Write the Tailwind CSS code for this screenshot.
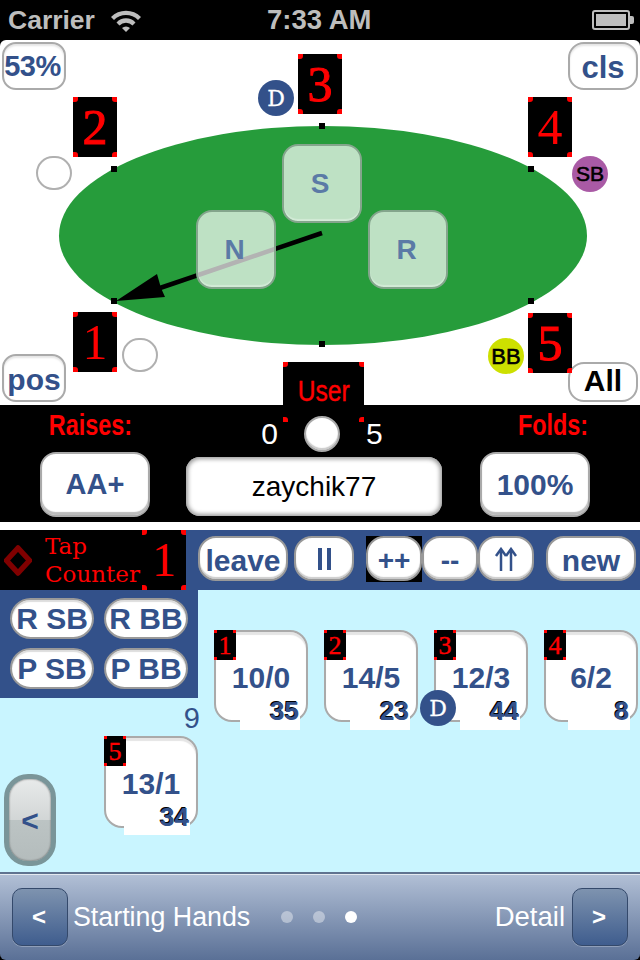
<!DOCTYPE html>
<html lang="en">
  <head>
    <meta charset="UTF-8" />
    <title>Tap Counter</title>
    <script src="https://cdn.jsdelivr.net/npm/@tailwindcss/browser@4"></script>
  </head>
  <body class="bg-black w-[640px] h-[960px] overflow-hidden font-['Liberation_Sans',Arial,sans-serif]">
    <!-- status bar -->
    <header class="relative h-[40px] flex items-center px-[8px] text-[#bdbdbd] font-bold">
      <span class="text-[26.5px] leading-none">Carrier</span>
      <svg class="ml-[15px]" width="32" height="24" viewBox="0 0 32 24">
        <path d="M1 9 A21 21 0 0 1 31 9 L28 12 A17 17 0 0 0 4 12 Z M6.5 14.5 A13 13 0 0 1 25.5 14.5 L22.5 17.5 A9 9 0 0 0 9.5 17.5 Z M12 20 A6 6 0 0 1 20 20 L16 24 Z" fill="#bdbdbd" />
      </svg>
      <span class="absolute left-[267px] top-[4px] text-[27.5px] leading-[32px]">7:33 AM</span>
      <div class="ml-auto mr-[-2px] flex items-center">
        <div class="w-[38px] h-[20px] border-2 border-[#bdbdbd] rounded-[3px] p-[2px]"><div class="h-full bg-[#bdbdbd]"></div></div>
        <div class="w-[4px] h-[8px] bg-[#bdbdbd] rounded-r-[2px]"></div>
      </div>
    </header>

    <!-- table, items sit on a free canvas -->
    <section class="relative z-10 h-[365px] bg-white rounded-t-[6px]">
      <div class="absolute left-[59px] top-[86px] w-[528px] h-[219px] rounded-[50%] bg-[#269c3b]"></div>

      <svg class="absolute left-0 top-0" width="640" height="365" viewBox="0 0 640 365">
        <line x1="322" y1="193" x2="160" y2="248" stroke="#000" stroke-width="4.5" />
        <polygon points="116,261 157,234 161,248 165,257" fill="#000" />
      </svg>

      <div class="absolute left-[111px] top-[126px] w-[6px] h-[6px] bg-black"></div>
      <div class="absolute left-[319px] top-[83px] w-[6px] h-[6px] bg-black"></div>
      <div class="absolute left-[528px] top-[126px] w-[6px] h-[6px] bg-black"></div>
      <div class="absolute left-[111px] top-[258px] w-[6px] h-[6px] bg-black"></div>
      <div class="absolute left-[528px] top-[258px] w-[6px] h-[6px] bg-black"></div>
      <div class="absolute left-[319px] top-[301px] w-[6px] h-[6px] bg-black"></div>

      <button class="absolute left-[282px] top-[104px] w-[80px] h-[79px] pr-[4px] pt-[1px] rounded-[16px] border-2 border-[#84a58c] bg-white/70 shadow-[inset_0_-2px_1px_#ffffff55] text-[#5b7aa6] font-bold text-[28px]">S</button>
      <button class="absolute left-[196px] top-[170px] w-[80px] h-[79px] pr-[3px] pt-[1px] rounded-[16px] border-2 border-[#84a58c] bg-white/70 shadow-[inset_0_-2px_1px_#ffffff55] text-[#5b7aa6] font-bold text-[28px]">N</button>
      <button class="absolute left-[368px] top-[170px] w-[80px] h-[79px] pr-[3px] pt-[1px] rounded-[16px] border-2 border-[#84a58c] bg-white/70 shadow-[inset_0_-2px_1px_#ffffff55] text-[#5b7aa6] font-bold text-[28px]">R</button>

      <button class="absolute left-[2px] top-[2px] w-[64px] h-[48px] pt-[1px] pr-[3px] rounded-[14px] border-2 border-[#aaa] bg-white shadow-[inset_0_2px_2px_#e5e5e5] text-[#33518a] font-bold text-[29px] tracking-[-0.5px]">53%</button>
      <button class="absolute left-[568px] top-[2px] w-[70px] h-[48px] pt-[1px] rounded-[16px] border-2 border-[#aaa] bg-white shadow-[inset_0_2px_2px_#e5e5e5] text-[#33518a] font-bold text-[31px]">cls</button>
      <button class="absolute left-[2px] top-[314px] w-[64px] h-[48px] pt-[1px] rounded-[14px] border-2 border-[#aaa] bg-white shadow-[inset_0_2px_2px_#e5e5e5] text-[#33518a] font-bold text-[30px]">pos</button>
      <button class="absolute left-[568px] top-[322px] w-[70px] h-[40px] pb-[2px] rounded-[16px] border-2 border-[#aaa] bg-white text-black font-bold text-[30px] leading-none">All</button>

      <div data-ticks="lg" class="absolute left-[73px] top-[57px] w-[44px] h-[60px] bg-black text-[#f00] font-['Liberation_Serif',serif] text-[50px] [-webkit-text-stroke:1px_#f00] flex items-center justify-center">2</div>
      <div data-ticks="lg" class="absolute left-[298px] top-[14px] w-[44px] h-[60px] bg-black text-[#f00] font-['Liberation_Serif',serif] text-[50px] [-webkit-text-stroke:1px_#f00] flex items-center justify-center">3</div>
      <div data-ticks="lg" class="absolute left-[528px] top-[57px] w-[44px] h-[60px] bg-black text-[#f00] font-['Liberation_Serif',serif] text-[50px] flex items-center justify-center">4</div>
      <div data-ticks="lg" class="absolute left-[73px] top-[272px] w-[44px] h-[60px] bg-black text-[#f00] font-['Liberation_Serif',serif] text-[50px] flex items-center justify-center">1</div>
      <div data-ticks="lg" class="absolute left-[528px] top-[273px] w-[44px] h-[60px] bg-black text-[#f00] font-['Liberation_Serif',serif] text-[50px] [-webkit-text-stroke:1px_#f00] flex items-center justify-center">5</div>
      <div data-ticks="lg" class="absolute left-[283px] top-[322px] w-[81px] h-[60px] bg-black text-[#f00] text-[30px] [-webkit-text-stroke:0.4px_#f00] flex items-start justify-center pt-[11px]"><span class="inline-block leading-[36px] scale-x-[0.82]">User</span></div>

      <div class="absolute left-[258px] top-[40px] w-[36px] h-[36px] rounded-full bg-[#33518a] text-white font-['DejaVu_Serif',serif] text-[22px] [-webkit-text-stroke:0.3px_#fff] flex items-center justify-center">D</div>
      <div class="absolute left-[572px] top-[116px] w-[36px] h-[36px] rounded-full bg-[#a95aa5] text-black text-[21px] flex items-center justify-center [-webkit-text-stroke:0.6px_#000]">SB</div>
      <div class="absolute left-[488px] top-[298px] w-[36px] h-[36px] rounded-full bg-[#cde000] text-black text-[22px] flex items-center justify-center [-webkit-text-stroke:0.6px_#000]">BB</div>
      <div class="absolute left-[36px] top-[116px] w-[36px] h-[34px] rounded-full border-2 border-[#b0b0b0] bg-white"></div>
      <div class="absolute left-[122px] top-[298px] w-[36px] h-[34px] rounded-full border-2 border-[#b0b0b0] bg-white"></div>
    </section>

    <!-- raises / name / folds -->
    <section class="h-[117px] bg-black flex pl-[40px]">
      <div class="w-[110px] flex flex-col items-center">
        <div class="h-[47px] mr-[10px] text-[#f00] font-bold text-[30px] leading-[40px]"><span class="inline-block scale-x-[0.78]">Raises:</span></div>
        <button class="w-[110px] h-[65px] rounded-[16px] border-2 border-[#aaa] bg-white shadow-[inset_0_-3px_1px_#bbb] text-[#33518a] font-bold text-[29px]">AA+</button>
      </div>
      <div class="w-[256px] ml-[36px] flex flex-col items-center">
        <div class="h-[52px] w-full flex items-start justify-center gap-[26px] text-white text-[30px] pt-[11px] pl-[16px]">
          <span class="leading-[36px]">0</span>
          <span class="relative z-20 w-[36px] h-[36px] rounded-full bg-white border-2 border-[#aaa] shadow-[inset_0_-2px_1px_#ccc]"></span>
          <span class="leading-[36px]">5</span>
        </div>
        <div class="w-full h-[59px] rounded-[14px] bg-white shadow-[inset_0_0_4px_2px_#999] text-black text-[28px] flex items-center justify-center">zaychik77</div>
      </div>
      <div class="w-[110px] ml-[38px] flex flex-col items-center">
        <div class="h-[47px] ml-[36px] text-[#f00] font-bold text-[30px] leading-[40px]"><span class="inline-block scale-x-[0.78]">Folds:</span></div>
        <button class="w-[110px] h-[65px] rounded-[16px] border-2 border-[#aaa] bg-white shadow-[inset_0_-3px_1px_#bbb] text-[#33518a] font-bold text-[30px]">100%</button>
      </div>
    </section>
    <div class="h-[8px] bg-white"></div>

    <!-- toolbar -->
    <section class="h-[60px] bg-[#33518a] flex items-center">
      <div class="w-[186px] h-full bg-black flex items-center">
        <svg class="ml-[4px] shrink-0" width="28" height="31" viewBox="0 0 28 31">
          <polygon points="14,3 25.5,15.5 14,28 2.5,15.5" fill="none" stroke="#800000" stroke-width="5.5" stroke-linejoin="round" />
        </svg>
        <div class="ml-[13px] w-[97px] shrink-0 text-[#f00] font-['DejaVu_Serif',serif] text-[23px] leading-[28px]">Tap<br />Counter</div>
        <div data-ticks="lg" class="relative ml-auto w-[44px] h-[60px] shrink-0 text-[#f00] font-['Liberation_Serif',serif] text-[48px] flex items-center justify-center">1</div>
      </div>
      <div class="flex items-center h-[46px] ml-[12px] mb-[3px]">
        <button class="w-[90px] h-[45px] rounded-[18px] border-2 border-[#999] bg-white shadow-[inset_0_-2px_1px_#ccc] text-[#33518a] font-bold text-[30px]">leave</button>
        <button class="w-[60px] h-[45px] ml-[6px] rounded-[18px] border-2 border-[#999] bg-white shadow-[inset_0_-2px_1px_#ccc] flex items-center justify-center gap-[5px]">
          <span class="w-[4px] h-[22px] bg-[#33518a]"></span>
          <span class="w-[4px] h-[22px] bg-[#33518a]"></span>
        </button>
        <div class="ml-[12px] w-[56px] h-[46px] bg-black">
          <button class="w-[56px] h-[45px] pt-[2px] rounded-[18px] border-2 border-[#999] bg-white shadow-[inset_0_-2px_1px_#ccc] text-[#33518a] font-bold text-[28px]">++</button>
        </div>
        <button class="w-[56px] h-[45px] pt-[2px] rounded-[18px] border-2 border-[#999] bg-white shadow-[inset_0_-2px_1px_#ccc] text-[#33518a] font-bold text-[28px]">--</button>
        <button class="w-[56px] h-[45px] rounded-[18px] border-2 border-[#999] bg-white shadow-[inset_0_-2px_1px_#ccc] flex items-center justify-center">
          <svg width="24" height="24" viewBox="0 0 24 24" fill="none" stroke="#33518a" stroke-width="2.5">
            <path d="M7 24 V3 M2 9 L7 2 L12 9 M17 24 V3 M12 9 L17 2 L22 9" />
          </svg>
        </button>
        <button class="w-[90px] h-[45px] ml-[12px] rounded-[18px] border-2 border-[#999] bg-white shadow-[inset_0_-2px_1px_#ccc] text-[#33518a] font-bold text-[30px]">new</button>
      </div>
    </section>

    <!-- hands area -->
    <section class="h-[282px] bg-[#c9f5ff] flex">
      <div class="w-[198px] shrink-0">
        <div class="h-[108px] bg-[#33518a] grid grid-cols-[84px_84px] grid-rows-[41px_41px] gap-x-[10px] gap-y-[9px] pt-[8px] pl-[10px]">
          <button class="rounded-full border-2 border-[#999] bg-white shadow-[inset_0_2px_1px_#ddd] text-[#33518a] font-bold text-[30px] leading-none whitespace-nowrap">R SB</button>
          <button class="rounded-full border-2 border-[#999] bg-white shadow-[inset_0_2px_1px_#ddd] text-[#33518a] font-bold text-[30px] leading-none whitespace-nowrap">R BB</button>
          <button class="rounded-full border-2 border-[#999] bg-white shadow-[inset_0_2px_1px_#ddd] text-[#33518a] font-bold text-[30px] leading-none whitespace-nowrap">P SB</button>
          <button class="rounded-full border-2 border-[#999] bg-white shadow-[inset_0_2px_1px_#ddd] text-[#33518a] font-bold text-[30px] leading-none whitespace-nowrap">P BB</button>
        </div>
        <div class="h-[38px] text-right text-[#33518a] text-[29px] leading-[40px] mr-[-2px]">9</div>
        <div class="flex items-start">
          <button class="mt-[38px] ml-[4px] w-[52px] h-[92px] rounded-[24px] border-[5px] border-[#7a9599] shadow-[inset_0_0_2px_#555] bg-[linear-gradient(#e8eaea_0%,#d2d6d6_50%,#bcc4c4_50%,#b4bcbc_100%)] text-[#33518a] font-bold text-[30px]">&lt;</button>
          <div class="relative ml-auto w-[94px] h-[92px] rounded-[18px] border-2 border-[#aaa] bg-white shadow-[inset_0_3px_1px_#e5e5e5]">
            <div data-ticks="sm" class="absolute left-[-2px] top-[-2px] w-[22px] h-[30px] bg-black text-[#f00] font-['Liberation_Serif',serif] text-[26px] [-webkit-text-stroke:0.4px_#f00] flex items-center justify-center">5</div>
            <div class="absolute left-0 right-0 top-[28px] text-center text-[#33518a] font-bold text-[30px] leading-[36px]">13/1</div>
            <div class="absolute left-[18px] right-[6px] top-[66px] h-[31px] bg-white text-right pr-[1px] text-[#33518a] font-bold text-[26px] leading-[26px] [text-shadow:-1px_-1px_0_#000]">34</div>
          </div>
        </div>
      </div>
      <div class="relative flex items-start gap-[16px] pl-[16px] pt-[40px]">
        <div class="relative w-[94px] h-[92px] rounded-[18px] border-2 border-[#aaa] bg-white shadow-[inset_0_3px_1px_#e5e5e5]">
          <div data-ticks="sm" class="absolute left-[-2px] top-[-2px] w-[22px] h-[30px] bg-black text-[#f00] font-['Liberation_Serif',serif] text-[26px] [-webkit-text-stroke:0.4px_#f00] flex items-center justify-center">1</div>
          <div class="absolute left-0 right-0 top-[28px] text-center text-[#33518a] font-bold text-[30px] leading-[36px]">10/0</div>
          <div class="absolute left-[24px] right-[6px] top-[66px] h-[32px] bg-white text-right pr-[1px] text-[#33518a] font-bold text-[26px] leading-[26px] [text-shadow:-1px_-1px_0_#000]">35</div>
        </div>
        <div class="relative w-[94px] h-[92px] rounded-[18px] border-2 border-[#aaa] bg-white shadow-[inset_0_3px_1px_#e5e5e5]">
          <div data-ticks="sm" class="absolute left-[-2px] top-[-2px] w-[22px] h-[30px] bg-black text-[#f00] font-['Liberation_Serif',serif] text-[26px] [-webkit-text-stroke:0.4px_#f00] flex items-center justify-center">2</div>
          <div class="absolute left-0 right-0 top-[28px] text-center text-[#33518a] font-bold text-[30px] leading-[36px]">14/5</div>
          <div class="absolute left-[24px] right-[6px] top-[66px] h-[32px] bg-white text-right pr-[1px] text-[#33518a] font-bold text-[26px] leading-[26px] [text-shadow:-1px_-1px_0_#000]">23</div>
        </div>
        <div class="relative w-[94px] h-[92px] rounded-[18px] border-2 border-[#aaa] bg-white shadow-[inset_0_3px_1px_#e5e5e5]">
          <div data-ticks="sm" class="absolute left-[-2px] top-[-2px] w-[22px] h-[30px] bg-black text-[#f00] font-['Liberation_Serif',serif] text-[26px] [-webkit-text-stroke:0.4px_#f00] flex items-center justify-center">3</div>
          <div class="absolute left-0 right-0 top-[28px] text-center text-[#33518a] font-bold text-[30px] leading-[36px]">12/3</div>
          <div class="absolute left-[24px] right-[6px] top-[66px] h-[32px] bg-white text-right pr-[1px] text-[#33518a] font-bold text-[26px] leading-[26px] [text-shadow:-1px_-1px_0_#000]">44</div>
          <div class="absolute left-[-16px] top-[58px] w-[36px] h-[36px] rounded-full bg-[#33518a] text-white font-['DejaVu_Serif',serif] text-[22px] [-webkit-text-stroke:0.3px_#fff] flex items-center justify-center">D</div>
        </div>
        <div class="relative w-[94px] h-[92px] rounded-[18px] border-2 border-[#aaa] bg-white shadow-[inset_0_3px_1px_#e5e5e5]">
          <div data-ticks="sm" class="absolute left-[-2px] top-[-2px] w-[22px] h-[30px] bg-black text-[#f00] font-['Liberation_Serif',serif] text-[26px] [-webkit-text-stroke:0.4px_#f00] flex items-center justify-center">4</div>
          <div class="absolute left-0 right-0 top-[28px] text-center text-[#33518a] font-bold text-[30px] leading-[36px]">6/2</div>
          <div class="absolute left-[22px] right-[6px] top-[66px] h-[32px] bg-white text-right pr-[1px] text-[#33518a] font-bold text-[26px] leading-[26px] [text-shadow:-1px_-1px_0_#000]">8</div>
        </div>
      </div>
    </section>

    <!-- bottom nav -->
    <footer class="h-[88px] rounded-b-[6px] border-t-2 border-[#5f7390] bg-[linear-gradient(#b2c0d6,#5a7096)] shadow-[inset_0_1px_0_#e4e9f0] flex items-center px-[12px] text-white">
      <button class="w-[56px] h-[58px] pr-[2px] rounded-[10px] border border-[#34496b] bg-[linear-gradient(#7e93af,#3f5d8e)] text-white font-bold text-[24px] shadow-[0_1px_0_#ffffff44]">&lt;</button>
      <span class="ml-[5px] text-[26.8px] leading-none">Starting Hands</span>
      <div class="flex items-center gap-[20px] ml-[31px]">
        <span class="w-[12px] h-[12px] rounded-full bg-white/40"></span>
        <span class="w-[12px] h-[12px] rounded-full bg-white/40"></span>
        <span class="w-[12px] h-[12px] rounded-full bg-white"></span>
      </div>
      <span class="ml-auto mr-[7px] text-[27.5px] leading-none">Detail</span>
      <button class="w-[56px] h-[58px] pr-[2px] rounded-[10px] border border-[#34496b] bg-[linear-gradient(#7e93af,#3f5d8e)] text-white font-bold text-[24px] shadow-[0_1px_0_#ffffff44]">&gt;</button>
    </footer>

    <script>
      // red corner ticks on the seat boxes
      const tickClasses = {
        lg: [
          "absolute left-0 top-0 w-[5px] h-[5px] bg-[#f00] rounded-br-[3px]",
          "absolute right-0 top-0 w-[5px] h-[5px] bg-[#f00] rounded-bl-[3px]",
          "absolute left-0 bottom-0 w-[5px] h-[5px] bg-[#f00] rounded-tr-[3px]",
          "absolute right-0 bottom-0 w-[5px] h-[5px] bg-[#f00] rounded-tl-[3px]",
        ],
        sm: [
          "absolute left-0 top-0 w-[3px] h-[3px] bg-[#f00]",
          "absolute right-0 top-0 w-[3px] h-[3px] bg-[#f00]",
          "absolute left-0 bottom-0 w-[3px] h-[3px] bg-[#f00]",
          "absolute right-0 bottom-0 w-[3px] h-[3px] bg-[#f00]",
        ],
      };
      document.querySelectorAll("[data-ticks]").forEach((box) => {
        tickClasses[box.dataset.ticks].forEach((cls) => {
          const tick = document.createElement("span");
          tick.className = cls;
          box.append(tick);
        });
      });
    </script>
  </body>
</html>
